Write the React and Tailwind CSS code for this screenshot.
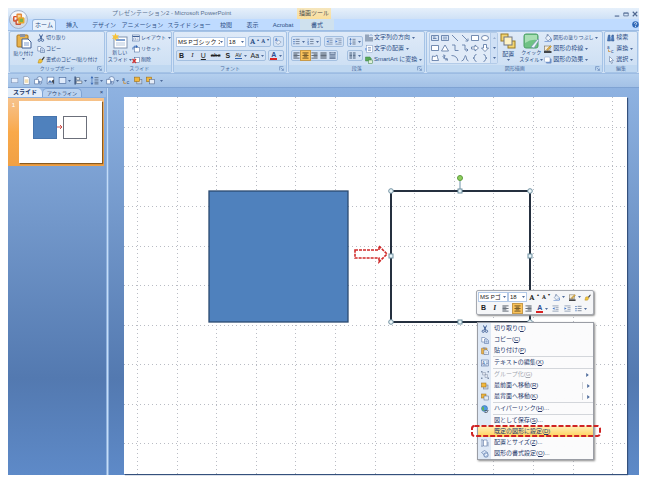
import clsx from 'clsx'

const C = '#3f5f94'

// every drawing lives in a 16x16 box
const ICONS = {
  cut: <><path d="M5 1l4 9M11 1L7 10" stroke="#33558f" strokeWidth="2" /><circle cx="4.5" cy="12.5" r="2.3" stroke="#33558f" strokeWidth="1.6" /><circle cx="11" cy="12.5" r="2.3" stroke="#33558f" strokeWidth="1.6" /></>,
  copy: <><path d="M1.500 3h6l2 2v7h-8z" fill="#fff" stroke={C} /><path d="M7 6h5l3 3v6H7z" fill="#dce9fb" stroke={C} /><path d="M9 10h4M9 12h4" stroke={C} /></>,
  brush: <><path d="M9 7l5-6 1.500 1.500L11 9z" fill="#3a3a3a" /><path d="M2 14l2-7 4-1 3 4-3 4z" fill="#f0c33c" stroke="#b48717" /></>,
  paste: <><rect x="1" y="2" width="11" height="12" rx="1" fill="#e9b34c" stroke="#a87524" /><rect x="4" y="1" width="5" height="3" fill="#8b93a5" /><path d="M6 6h6l3 3v6H6z" fill="#fff" stroke={C} /><path d="M8 10h5M8 12h5" stroke="#7c9cd0" /></>,
  newSlide: <><rect x="2" y="4" width="13" height="11" fill="#fff" stroke="#8093b0" /><path d="M4 7h9" stroke="#7d9fd0" strokeWidth="2" /><path d="M4 10h9M4 12h9" stroke="#b6c7de" /><path d="M3.500 0l1 2.500L7 2l-1.500 2L7 6 4.500 5.500 3.500 8l-1-2.500L0 6l1.500-2L0 2l2.500.5z" fill="#f7c338" /></>,
  layout: <><rect x="1" y="2" width="14" height="12" fill="#f4f8fe" stroke={C} /><path d="M1 5h14" stroke={C} strokeWidth="2" /><path d="M3 8h4v4H3zM9 8h4M9 11h4" stroke="#7893bf" /></>,
  reset: <><rect x="5" y="5" width="10" height="9" fill="#fff" stroke={C} /><path d="M2 9C1 4 5 1 9 3" stroke="#2c62b5" strokeWidth="2" /><path d="M8 0l4 3-4 3z" fill="#2c62b5" /></>,
  remove: <><rect x="5" y="3" width="10" height="10" fill="#fff" stroke={C} /><path d="M1 6l7 8M8 6l-7 8" stroke="#d2302d" strokeWidth="2.500" /></>,
  bullets: <><path d="M6 3h9M6 8h9M6 13h9" stroke="#53657f" strokeWidth="1.600" /><path d="M1 2h2.500v2.500H1zM1 7h2.500v2.500H1zM1 12h2.500v2.500H1z" fill="#2f61b0" /></>,
  numbers: <><path d="M7 3h8M7 8h8M7 13h8" stroke="#53657f" strokeWidth="1.600" /><path d="M2.500 1v4M1 7h3l-3 3h3M1 12h3v3H1" stroke="#2f61b0" /></>,
  outdent: <><path d="M1 2h14M8 6h7M8 10h7M1 14h14" stroke="#6c7f9d" strokeWidth="1.500" /><path d="M6 5v6L1 8z" fill="#3f74c8" /></>,
  indent: <><path d="M1 2h14M8 6h7M8 10h7M1 14h14" stroke="#6c7f9d" strokeWidth="1.500" /><path d="M1 5v6l5-3z" fill="#3f74c8" /></>,
  spacing: <><path d="M8 3h7M8 7h7M8 11h7M8 14h7" stroke="#53657f" strokeWidth="1.500" /><path d="M3.500 0L6 4H1zM3.500 16L6 12H1zM3 3h1v10H3z" fill="#2f61b0" /></>,
  left: <path d="M1 2h14M1 5h9M1 8h14M1 11h9M1 14h14" stroke="#3c4653" strokeWidth="1.700" />,
  center: <path d="M1 2h14M4 5h8M1 8h14M4 11h8M1 14h14" stroke="#4d3b1c" strokeWidth="1.700" />,
  right: <path d="M1 2h14M6 5h9M1 8h14M6 11h9M1 14h14" stroke="#3c4653" strokeWidth="1.700" />,
  justify: <path d="M1 2h14M1 5h14M1 8h14M1 11h14M1 14h14" stroke="#3c4653" strokeWidth="1.700" />,
  distribute: <path d="M2 0v4M14 0v4M2 2h12M1 6h14M1 9h14M1 12h14M1 15h14" stroke="#3c5272" strokeWidth="1.600" />,
  columns: <path d="M1 2h6M1 5h6M1 8h6M1 11h6M1 14h6M9 2h6M9 5h6M9 8h6M9 11h6M9 14h6" stroke="#3c5272" strokeWidth="1.700" />,
  textDir: <><path d="M2 1v14M6 1v14M10 6v9M14 6v9" stroke="#3c5272" strokeWidth="1.800" /><path d="M9 4l3-3 3 3" stroke="#2f61b0" /></>,
  textAlign: <><rect x="3" y="1" width="12" height="14" fill="#fff" stroke="#7e97bf" /><path d="M6 5h6M6 8h6M6 11h6" stroke={C} /><path d="M0 6h4v5H0z" fill="#8fb1e4" /></>,
  smartArt: <><path d="M1 2h9l3 4-3 4H1z" fill="#5aa958" stroke="#3b8145" /><rect x="7" y="8" width="8" height="7" fill="#dff0da" stroke="#3b8145" /></>,
  eraser: <><path d="M2 11l6-6 6 4-5 5H5z" fill="#e8eef8" stroke="#61779c" /><text x="0" y="7" fontSize="8" fill="#2f61b0" stroke="none">A</text></>,
  arrange: <><rect x="1" y="1" width="7" height="7" fill="#f3d570" stroke="#9a7b23" /><rect x="8" y="8" width="7" height="7" fill="#f3d570" stroke="#9a7b23" /><rect x="4" y="4" width="8" height="8" fill="#fff3c4" stroke="#6f7787" /></>,
  quickStyle: <><rect x="1" y="1" width="14" height="14" rx="2" fill="#6fc285" stroke="#4c9f67" /><path d="M2 2h12v5Q8 6 2 10z" fill="#a9dfb4" /><path d="M8 14l7-8 1 1-5 8z" fill="#eef4fb" stroke="#6d88b5" strokeWidth=".6" /></>,
  fill: <><path d="M3 8l5-6 6 6-6 6z" fill="#e9f0fa" stroke="#48628f" /><path d="M6 5V1h3" stroke="#48628f" /><path d="M14 8q3 4 1 6t-2-2z" fill="#5687cf" /><path d="M1 15h13" stroke="#8aa9dc" strokeWidth="2" /></>,
  outline: <><rect x="1" y="2" width="11" height="9" fill="#f6edda" stroke="#615745" /><path d="M5 9l8-8 2 2-8 8z" fill="#e0ad3c" stroke="#73581c" strokeWidth=".6" /><path d="M0 14h15" stroke="#111" strokeWidth="3" /></>,
  effect: <><rect x="4" y="5" width="11" height="10" rx="2" fill="#6c8fc7" /><rect x="1" y="2" width="11" height="10" rx="2" fill="#fff" stroke="#7f9bc8" /></>,
  find: <><path d="M3 2h3v4l1 8H1l1-8zM10 2h3v4l1 8H9l0-8z" fill="#4a78b9" stroke="#2f568f" /><path d="M6 6h4v3H6z" fill="#7fa4da" /></>,
  replace: <><text x="0" y="8" fontSize="9" fill="#2f568f" stroke="none">a</text><text x="8" y="15" fontSize="10" fill="#2f568f" stroke="none">c</text><path d="M3 9v4h4" stroke="#d08b2b" strokeWidth="1.500" /></>,
  select: <path d="M5 1l8 8H9l2 5-2 1-2-5-2 2z" fill="#fff" stroke="#4c6896" />,
  page: <><path d="M3 1h7l3 3v11H3z" fill="#fff" stroke="#6c7f9d" /><path d="M5 7h6M5 9h6M5 11h6" stroke="#e0b04c" /></>,
  blank: <rect x="3" y="4" width="11" height="8" fill="#e7eefa" stroke="#7d93b8" />,
  shapes: <><circle cx="10" cy="6" r="5" fill="#e8f1fd" stroke={C} /><path d="M1 6h7v8H1z" fill="#fff" stroke={C} /><path d="M9 9l5 3-3 3z" fill="#d8e6fa" stroke={C} /></>,
  picture: <><rect x="2" y="2" width="12" height="12" fill="#fff" stroke={C} /><path d="M3 12l4-5 3 3 3-4v6z" fill="#4a78b9" /><path d="M10 9l4-3v8z" fill="#3e3e3e" /></>,
  rect: <rect x="2" y="3" width="12" height="10" fill="#dfeafa" stroke={C} />,
  alignObj: <><path d="M2 1v14" stroke="#1f3864" strokeWidth="2" /><path d="M4 3h6v4H4zM4 9h10v4H4z" fill="#fff" stroke="#345" /></>,
  front: <><rect x="5" y="6" width="9" height="8" fill="#c9d3e2" stroke="#63728b" /><rect x="1" y="2" width="9" height="8" fill="#f1b73d" stroke="#996a15" /></>,
  back: <><rect x="1" y="2" width="9" height="8" fill="#f1b73d" stroke="#996a15" /><rect x="6" y="6" width="9" height="8" fill="#e4ebf6" stroke="#4e6488" /></>,
  group: <><path d="M3 3h6v5H3zM8 7h5v6H8z" fill="#dfe4ec" stroke="#8593aa" /><path d="M0 0h3v3H0zM13 0h3v3h-3zM0 13h3v3H0zM13 13h3v3h-3z" fill="#7f8fa9" /></>,
  textEdit: <><rect x="1" y="2" width="14" height="12" fill="#eaf2fd" stroke={C} /><text x="2" y="11" fontSize="9" fill="#2f568f" stroke="none">A</text><path d="M10 6h4M10 9h4M4 12h9" stroke={C} /></>,
  globe: <><circle cx="7" cy="7" r="6" fill="#4f9be0" stroke="#2d5f9c" /><path d="M3 3q4 1 3 4t2 5Q2 12 2 7z" fill="#62b354" /><path d="M7 11h4a2 2 0 010 4H7M15 11h-2" stroke="#46505e" strokeWidth="1.600" /></>,
  size: <><path d="M5 2h7v12H5z" fill="#fff" stroke={C} /><path d="M2 1v14M0 3l2-2 2 2M0 13l2 2 2-2M14 6v9" stroke="#48628f" /></>,
  format: <><path d="M1 5l6-4 6 4-5 6z" fill="#dbe8fa" stroke={C} /><circle cx="10" cy="10" r="4.500" fill="#b9cdea" stroke="#3d5a8c" /><path d="M8 11l4-3" stroke="#fff" strokeWidth="2" /></>,
}

function Icon({ name, className = 'size-2' }) {
  return (
    <svg viewBox="0 0 16 16" fill="none" className={clsx('shrink-0', className)} aria-hidden="true">
      {ICONS[name]}
    </svg>
  )
}

function Caret({ className }) {
  return (
    <svg viewBox="0 0 6 4" className={clsx('w-[3px] h-[2px] shrink-0', className)} aria-hidden="true">
      <path d="M0 0h6L3 4z" fill="#4f6c9c" />
    </svg>
  )
}

function Tool({ icon, label, caret, small }) {
  return (
    <button type="button" className={clsx('flex items-center gap-px h-[11px] whitespace-nowrap', small ? 'text-[5px]' : 'text-[6px]')}>
      <Icon name={icon} />
      {label}
      {caret && <Caret className="ml-px" />}
    </button>
  )
}

function IconButton({ icon, label, caret, active, children }) {
  return (
    <button
      type="button"
      aria-label={label}
      className={clsx('flex items-center justify-center gap-[2px] h-[9px] min-w-[9px] px-px', active && 'bg-[#fbc35a] outline outline-[#c79a4a]')}
    >
      {icon ? <Icon name={icon} className="size-[7px]" /> : children}
      {caret && <Caret />}
    </button>
  )
}

function Cluster({ children }) {
  return <div className="flex items-center justify-between border border-[#a3bfe0] rounded-[2px] bg-[#d3e2f5] h-[11px]">{children}</div>
}

function Group({ title, launcher, className, children }) {
  return (
    <section className="min-w-0 flex flex-col border border-[#a5c3e6] rounded-[2px] bg-linear-to-b from-[#dfeaf8] to-[#cbdef3]">
      <div className={clsx('flex-1 flex items-start', className)}>{children}</div>
      <h2 className="relative h-[7px] shrink-0 bg-[#c0d8f1] text-center text-[5px] leading-[7px] text-[#4a6c9e] whitespace-nowrap">
        {title}
        {launcher && (
          <svg viewBox="0 0 8 8" className="absolute right-[2px] top-px size-[5px]" fill="none" stroke="#5d7fb3">
            <path d="M1 7V1h6M3 3l4 4M7 4v3H4" />
          </svg>
        )}
      </h2>
    </section>
  )
}

function Combo({ label, value, options, className }) {
  return (
    <div className={clsx('relative bg-white border border-[#b3cae8] h-[10px]', className)}>
      <select aria-label={label} defaultValue={value} className="block w-full h-full appearance-none bg-transparent pl-px pr-[4px] text-[6px] leading-[8px] text-[#222]">
        {options.map((o) => <option key={o}>{o}</option>)}
      </select>
      <Caret className="absolute right-px top-[3px] pointer-events-none" />
    </div>
  )
}

function FontColor() {
  return <span className="block border-b-2 border-[#d92222] text-[7px] leading-[6px] font-bold text-[#2c4f91] px-px">A</span>
}

const TABS = [
  ['ホーム', 'w-[24px]'],
  ['挿入', 'w-[32px]'],
  ['デザイン', 'w-[32px]'],
  ['アニメーション', 'w-[45px]'],
  ['スライド ショー', 'w-[48px]'],
  ['校閲', 'w-[26px]'],
  ['表示', 'w-[27px]'],
  ['Acrobat', 'w-[34px]'],
  ['書式', 'w-[34px]'],
]

const GALLERY = [
  <path d="M1 3h14v10H1zM4 6h5M4 9h7" fill="#dbe6f5" />,
  <path d="M1 3h14v10H1zM6 5v6M10 5v6" fill="#dbe6f5" />,
  <path d="M2 2l12 12" />,
  <path d="M2 2l11 11M14 9v5H9" />,
  <path d="M1 3h14v10H1z" fill="#fff" />,
  <ellipse cx="8" cy="8" rx="7" ry="5" fill="#fff" />,
  <path d="M1 3h14v10H1z" fill="#fff" />,
  <path d="M8 2l7 12H1z" fill="#fff" />,
  <path d="M2 2h6v11h7" />,
  <path d="M2 2h6v10h6M11 9l3 3-3 3" />,
  <path d="M1 6h7V2l7 6-7 6v-4H1z" fill="#fff" />,
  <path d="M5 1h6v7h4l-7 7-7-7h4z" fill="#fff" />,
  <path d="M2 13l1-9 5 1 4-3 1 5 2 6z" fill="#fff" />,
  <path d="M4 2q7 0 3 4T9 9t3 5M3 5l5 2M8 12l5-2" />,
  <path d="M1 3q11 0 13 11" />,
  <path d="M1 14Q5 14 7 7t3-2q1 9 5 9" />,
  <path d="M11 1Q7 1 7 5T4 8q3 0 3 3t4 4" />,
  <path d="M5 1q4 0 4 4t3 3q-3 0-3 3t-4 4" />,
]

function TitleBar() {
  return (
    <header className="relative">
      <div className="flex h-[11px] items-center bg-linear-to-b from-[#e6f0fb] to-[#cfe1f6] pl-[104px] text-[6px] text-[#59708f]">
        <h1 className="w-[185px] whitespace-nowrap">プレゼンテーション2 - Microsoft PowerPoint</h1>
        <span className="h-full w-[34px] bg-linear-to-b from-[#f5e6bd] to-[#fbdf9c] text-center leading-[11px] text-[#4b4b4b] whitespace-nowrap">描画ツール</span>
        <div className="ml-auto flex gap-[3px] pr-px">
          <button type="button" aria-label="最小化" className="w-[6px]"><svg viewBox="0 0 8 8" className="size-[6px]"><path d="M1 6h6v1.500H1z" fill="#4f6790" /></svg></button>
          <button type="button" aria-label="元に戻す" className="w-[6px]"><svg viewBox="0 0 8 8" className="size-[6px]" fill="none" stroke="#4f6790"><path d="M1 2.500h6v4H1zM1 3h6" /></svg></button>
          <button type="button" aria-label="閉じる" className="w-[6px]"><svg viewBox="0 0 8 8" className="size-[6px]" fill="none" stroke="#4f6790" strokeWidth="1.500"><path d="M1 1l6 6M7 1L1 7" /></svg></button>
        </div>
      </div>
      <nav className="flex h-[11px] items-stretch bg-[#bfdbff] pl-[24px] text-[6px] text-[#2d4f86]">
        {TABS.map(([label, width], i) => (
          <button
            key={label}
            type="button"
            className={clsx('text-center leading-[10px] whitespace-nowrap', width, i === 0 && 'rounded-t-[3px] border border-b-0 border-[#93b4dd] bg-[#e9f2fc]', i === 8 && 'bg-[#cfe1ee]')}
          >
            {label}
          </button>
        ))}
        <button type="button" aria-label="ヘルプ" className="ml-auto flex items-center">
          <svg viewBox="0 0 16 16" className="size-[7px]"><circle cx="8" cy="8" r="7.500" fill="#2f68b8" /><path d="M5.500 6a2.500 2.500 0 115 0c0 2-2.500 2-2.500 4" fill="none" stroke="#fff" strokeWidth="1.800" /><circle cx="8" cy="12.500" r="1.200" fill="#fff" /></svg>
        </button>
      </nav>
      <button type="button" aria-label="Office ボタン" className="absolute left-px top-[2px]">
        <svg viewBox="0 0 40 40" className="size-[19px]">
          <circle cx="20" cy="20" r="19" fill="#d3dae6" stroke="#8f9fba" strokeWidth="1.500" />
          <ellipse cx="20" cy="12" rx="15" ry="9" fill="#f6f8fb" />
          <g fill="none" strokeWidth="3">
            <rect x="10" y="14" width="9" height="9" rx="1" stroke="#d9502a" />
            <rect x="17" y="9" width="9" height="9" rx="1" stroke="#e58a3a" fill="#f9d49a" />
            <rect x="15" y="21" width="9" height="9" rx="1" stroke="#c9543a" fill="#f2e3d0" />
            <rect x="21" y="17" width="10" height="10" rx="1" stroke="#e8a82a" fill="#7fb04a" />
          </g>
        </svg>
      </button>
    </header>
  )
}

function Ribbon() {
  return (
    <div className="grid h-[44px] grid-cols-[97fr_66fr_115fr_138fr_178fr_34fr] gap-px border-y border-[#9dbce3] bg-[#d3e3f6] px-px text-[#2d4f86]">
      <Group title="クリップボード" launcher>
        <button type="button" className="flex w-[27px] flex-col items-center gap-px pt-px text-[5px] leading-[7px]">
          <Icon name="paste" className="size-4" />
          貼り付け
          <Caret />
        </button>
        <div>
          <Tool icon="cut" label="切り取り" small />
          <Tool icon="copy" label="コピー" small />
          <Tool icon="brush" label="書式のコピー/貼り付け" small />
        </div>
      </Group>
      <Group title="スライド">
        <button type="button" className="flex w-[25px] flex-col items-center pt-px text-[5px] leading-[7px] whitespace-nowrap">
          <Icon name="newSlide" className="size-4" />
          新しい
          <span className="flex items-center gap-px">スライド<Caret /></span>
        </button>
        <div>
          <Tool icon="layout" label="レイアウト" small caret />
          <Tool icon="reset" label="リセット" small />
          <Tool icon="remove" label="削除" small />
        </div>
      </Group>
      <Group title="フォント" launcher className="flex-col gap-[3px] px-[2px] pt-[4px]">
        <div className="flex w-full items-center gap-[2px]">
          <Combo label="フォント" value="MS Pゴシック 本文" options={['MS Pゴシック 本文', 'Arial']} className="w-[51px]" />
          <Combo label="フォント サイズ" value="18" options={['18', '24', '32']} className="w-[20px]" />
          <Cluster>
            <IconButton label="フォントの拡大"><b className="font-serif text-[8px] leading-[9px]">A</b><sup className="text-[4px]">▴</sup></IconButton>
            <IconButton label="フォントの縮小"><b className="font-serif text-[6px] leading-[9px]">A</b><sup className="text-[4px]">▾</sup></IconButton>
          </Cluster>
          <Cluster><IconButton icon="eraser" label="書式のクリア" /></Cluster>
        </div>
        <div className="flex w-full items-center gap-[2px] text-[7px] leading-[9px] text-[#222]">
          <div className="w-[92px]">
            <Cluster>
              <IconButton label="太字"><b>B</b></IconButton>
              <IconButton label="斜体"><i className="font-serif">I</i></IconButton>
              <IconButton label="下線"><u>U</u></IconButton>
              <IconButton label="取り消し線"><s className="text-[6px]">abc</s></IconButton>
              <IconButton label="影"><b>S</b></IconButton>
              <IconButton label="文字の間隔" caret><span className="border-b border-[#2f61b0] text-[5px] leading-[6px]">AV</span></IconButton>
              <IconButton label="文字種の変換" caret>Aa</IconButton>
            </Cluster>
          </div>
          <Cluster><IconButton label="フォントの色" caret><FontColor /></IconButton></Cluster>
        </div>
      </Group>
      <Group title="段落" launcher className="gap-[2px] px-[2px]">
        <div className="flex w-[73px] flex-col gap-[3px] pt-[4px]">
          <div className="flex justify-between">
            <Cluster><IconButton icon="bullets" label="箇条書き" caret /><IconButton icon="numbers" label="段落番号" caret /></Cluster>
            <Cluster><IconButton icon="outdent" label="インデントを減らす" /><IconButton icon="indent" label="インデントを増やす" /></Cluster>
            <Cluster><IconButton icon="spacing" label="行間" caret /></Cluster>
          </div>
          <div className="flex justify-between">
            <Cluster>
              <IconButton icon="left" label="左揃え" />
              <IconButton icon="center" label="中央揃え" active />
              <IconButton icon="right" label="右揃え" />
              <IconButton icon="justify" label="両端揃え" />
              <IconButton icon="distribute" label="均等割り付け" />
            </Cluster>
            <Cluster><IconButton icon="columns" label="段組み" caret /></Cluster>
          </div>
        </div>
        <div>
          <Tool icon="textDir" label="文字列の方向" caret />
          <Tool icon="textAlign" label="文字の配置" caret />
          <Tool icon="smartArt" label="SmartArt に変換" caret />
        </div>
      </Group>
      <Group title="図形描画" launcher className="px-[2px]">
        <div className="flex h-[32px] rounded-[2px] border border-[#b3cbe8] bg-[#e1ebf8]">
          <div className="grid grid-cols-6 content-center">
            {GALLERY.map((shape, i) => (
              <button key={i} type="button" aria-label={`図形 ${i + 1}`} className="flex h-[10px] w-[10px] items-center justify-center">
                <svg viewBox="0 0 16 16" className="size-2" fill="none" stroke="#54719f" strokeWidth="1.600">{shape}</svg>
              </button>
            ))}
          </div>
          <div className="flex w-[7px] flex-col justify-around border-l border-[#b3cbe8] bg-[#cfe0f5]">
            <button type="button" aria-label="上へ" className="flex justify-center"><Caret className="rotate-180 opacity-40" /></button>
            <button type="button" aria-label="下へ" className="flex justify-center"><Caret /></button>
            <button type="button" aria-label="その他" className="flex justify-center"><Caret /></button>
          </div>
        </div>
        <button type="button" className="flex w-[20px] flex-col items-center gap-px pt-px text-[6px] leading-[8px]">
          <Icon name="arrange" className="size-4" />
          配置
          <Caret />
        </button>
        <button type="button" className="flex w-[26px] flex-col items-center pt-px text-[5px] leading-[7px] whitespace-nowrap">
          <Icon name="quickStyle" className="size-4" />
          クイック
          <span className="flex items-center gap-px">スタイル<Caret /></span>
        </button>
        <div>
          <Tool icon="fill" label="図形の塗りつぶし" small caret />
          <Tool icon="outline" label="図形の枠線" caret />
          <Tool icon="effect" label="図形の効果" caret />
        </div>
      </Group>
      <Group title="編集" className="pl-[2px]">
        <div>
          <Tool icon="find" label="検索" />
          <Tool icon="replace" label="置換" caret />
          <Tool icon="select" label="選択" caret />
        </div>
      </Group>
    </div>
  )
}

const QUICK = [
  ['blank', '新規'], ['page', '開く'], ['shapes', '図形'], ['picture', '図'], ['rect', '四角形', true], ['alignObj', '配置', true],
  ['spacing', '行間', true], ['shapes', '図形の変更', true], ['replace', '置換'], ['front', '最前面へ移動'], ['back', '最背面へ移動'],
]

function QuickAccess() {
  return (
    <div className="flex h-[14px] items-center gap-px border-b border-[#7fa3d3] bg-linear-to-b from-[#b4cfee] to-[#a3c1e6] pl-px">
      {QUICK.map(([icon, label, caret]) => (
        <button key={label} type="button" aria-label={label} className="flex items-center gap-px px-px">
          <Icon name={icon} className="size-[9px]" />
          {caret && <Caret />}
        </button>
      ))}
      <button type="button" aria-label="カスタマイズ" className="ml-[3px]"><Caret /></button>
    </div>
  )
}

function SlidePanel() {
  return (
    <aside className="flex w-[98px] shrink-0 flex-col">
      <div className="flex h-[9px] items-stretch bg-[#9dbde6] text-[#1e3a6b]">
        <button type="button" className="w-[34px] rounded-tr-[5px] bg-[#e2edfa] text-[6px] leading-[9px] font-bold">スライド</button>
        <button type="button" className="w-[40px] rounded-t-[5px] border border-b-0 border-[#7fa3d3] bg-[#b9d2f0] text-[5px] leading-[8px]">アウトライン</button>
        <button type="button" aria-label="閉じる" className="ml-auto w-[9px] text-[6px] leading-[9px]">×</button>
      </div>
      <button type="button" className="mt-px mr-[2px] flex bg-linear-to-b from-[#f6c38c] via-[#f9a94a] to-[#f0a044] pt-[3px] pb-[3px] pr-[2px]">
        <span className="w-[11px] text-[6px] text-white">1</span>
        <svg viewBox="0 0 83 62" className="min-w-0 flex-1 bg-white shadow-[1px_1px_1px_#8a5a1e]" aria-label="スライド 1">
          <rect x="14.500" y="15.500" width="23" height="22" fill="#4f81bd" stroke="#4674ad" />
          <path d="M38 26h5M41 24l2 2-2 2" fill="none" stroke="#d0504a" />
          <rect x="44.500" y="15.500" width="23" height="22" fill="#fff" stroke="#6b6f7a" />
        </svg>
      </button>
    </aside>
  )
}

const VLINES = [13, 53, 92, 132, 171, 211, 251, 290, 330, 369, 409, 449, 488]
const HLINES = [30, 69, 109, 149, 188, 228, 267, 307, 346]
const CORNERS = [[267, 94], [406, 94], [267, 225], [406, 225]]
const MIDDLES = [[336, 94], [267, 159], [406, 159], [336, 225]]

function SlideCanvas() {
  return (
    <svg viewBox="0 0 503 377" className="block w-full" aria-label="スライド">
      <rect width="503" height="377" fill="#fff" />
      <g stroke="#b9bcc4" strokeDasharray="1 3">
        {VLINES.map((x) => <path key={x} d={`M${x + 0.5} 0v377`} />)}
        {HLINES.map((y) => <path key={y} d={`M0 ${y + 0.5}h503`} />)}
      </g>
      <rect x="85" y="94" width="139" height="131" fill="#4f81bd" stroke="#2c4a70" strokeWidth="1.300" />
      <path d="M231 153h24v-4l8 8-8 8v-4h-24z" fill="#fff" stroke="#d02a2a" strokeWidth="1.600" strokeDasharray="3 1" />
      <rect x="267" y="94" width="139" height="131" fill="none" stroke="#25303f" strokeWidth="2" />
      <path d="M336 83v9" stroke="#6d93a8" />
      <circle cx="336" cy="81" r="2.500" fill="#8fd05c" stroke="#5e9a3e" />
      {CORNERS.map(([x, y]) => <circle key={`${x}-${y}`} cx={x} cy={y} r="2.300" fill="#eef8fb" stroke="#6f8f9f" />)}
      {MIDDLES.map(([x, y]) => <rect key={`${x}-${y}`} x={x - 2} y={y - 2} width="4" height="4" fill="#e8f5fa" stroke="#6f8f9f" />)}
    </svg>
  )
}

function MiniToolbar() {
  return (
    <div className="absolute left-[352px] top-[193px] flex h-[25px] w-[118px] flex-col justify-between rounded-[2px] border border-[#a6a9b0] bg-[#f5f6f8] p-px text-[7px] text-[#222] shadow-[1px_1px_2px_#888]">
      <div className="flex items-center justify-between">
        <div className="flex">
          <Combo label="フォント" value="MS Pゴ" options={['MS Pゴ', 'Arial']} className="w-[30px]" />
          <Combo label="サイズ" value="18" options={['18', '24']} className="w-[19px]" />
        </div>
        <IconButton label="フォントの拡大"><b className="font-serif text-[8px] leading-[9px]">A</b><sup className="text-[4px]">▴</sup></IconButton>
        <IconButton label="フォントの縮小"><b className="font-serif text-[6px] leading-[9px]">A</b><sup className="text-[4px]">▾</sup></IconButton>
        <IconButton icon="fill" label="塗りつぶし" caret />
        <IconButton icon="outline" label="枠線" caret />
        <IconButton icon="brush" label="書式のコピー" />
      </div>
      <div className="flex items-center justify-between pl-px pr-[4px]">
        <IconButton label="太字"><b>B</b></IconButton>
        <IconButton label="斜体"><i className="font-serif font-bold">I</i></IconButton>
        <IconButton icon="left" label="左揃え" />
        <IconButton icon="center" label="中央揃え" active />
        <IconButton icon="right" label="右揃え" />
        <IconButton label="フォントの色" caret><FontColor /></IconButton>
        <IconButton icon="outdent" label="インデントを減らす" />
        <IconButton icon="indent" label="インデントを増やす" />
        <IconButton icon="bullets" label="箇条書き" caret />
      </div>
    </div>
  )
}

const MENU = [
  { icon: 'cut', label: '切り取り', k: 'T' },
  { icon: 'copy', label: 'コピー', k: 'C' },
  { icon: 'paste', label: '貼り付け', k: 'P' },
  { icon: 'textEdit', label: 'テキストの編集', k: 'X', sep: true },
  { icon: 'group', label: 'グループ化', k: 'G', sep: true, sub: true, disabled: true },
  { icon: 'front', label: '最前面へ移動', k: 'R', sub: true, split: true },
  { icon: 'back', label: '最背面へ移動', k: 'K', sub: true, split: true },
  { icon: 'globe', label: 'ハイパーリンク', k: 'H', sep: true, dots: true },
  { label: '図として保存', k: 'S', sep: true, dots: true },
  { label: '既定の図形に設定', k: 'D', hot: true },
  { icon: 'size', label: '配置とサイズ', k: 'Z', dots: true },
  { icon: 'format', label: '図形の書式設定', k: 'O', dots: true },
]

function ContextMenu() {
  return (
    <ul className="absolute left-[353px] top-[225px] w-[117px] border border-[#9a9da5] bg-linear-to-r from-[#dfe9f6] from-[13px] to-[#fbfbfc] to-[13px] text-[6px] text-[#27386b] shadow-[1px_1px_2px_#888]">
      {MENU.map((m) => (
        <li key={m.label} className={clsx(m.sep && 'bg-linear-to-r from-transparent from-[15px] to-[#d3d6db] to-[15px] bg-[length:100%_1px] bg-no-repeat pt-px')}>
          <button
            type="button"
            disabled={m.disabled}
            className={clsx('relative flex h-[11px] w-full items-center whitespace-nowrap', m.disabled && 'text-[#a3a7b0]', m.hot && 'bg-linear-to-b from-[#fff0b8] to-[#ffd052]')}
          >
            <span className="flex w-[13px] justify-center">{m.icon && <Icon name={m.icon} />}</span>
            <span className="pl-[3px]">{m.label}(<u>{m.k}</u>){m.dots && '...'}</span>
            {m.sub && (
              <span className={clsx('ml-auto flex h-[7px] w-[11px] items-center justify-center', m.split && 'border-l border-[#cfd2d8]')}>
                <svg viewBox="0 0 4 6" className="h-[4px] w-[3px]"><path d="M0 0v6l4-3z" fill="#4f6c9c" /></svg>
              </span>
            )}
            {m.hot && (
              <svg viewBox="0 0 130 12" className="absolute -left-[7px] -top-px h-[12px] w-[130px] pointer-events-none" fill="none" aria-hidden="true">
                <rect x="1" y="1" width="128" height="10" rx="2.500" stroke="#cf2323" strokeWidth="2" strokeDasharray="5 2" />
              </svg>
            )}
          </button>
        </li>
      ))}
    </ul>
  )
}

export default function App() {
  return (
    <div className="flex min-h-screen flex-col bg-white pt-2 pr-[9px] pb-[11px] pl-2 [font-family:'Liberation_Sans','Noto_Sans_CJK_JP',sans-serif]">
      <TitleBar />
      <Ribbon />
      <QuickAccess />
      <main className="flex flex-1 bg-linear-to-b from-[#8eb2e1] via-[#5379b0] via-75% to-[#5e8ac8]">
        <SlidePanel />
        <div className="w-[3px] border-x border-[#8db0dc] bg-[#c4dcf8]" />
        <div className="flex-1 pt-[9px] pr-[12px] pl-[15px]">
          <div className="relative shadow-[1px_1px_1px_#34507c]">
            <SlideCanvas />
            <MiniToolbar />
            <ContextMenu />
          </div>
        </div>
      </main>
    </div>
  )
}
